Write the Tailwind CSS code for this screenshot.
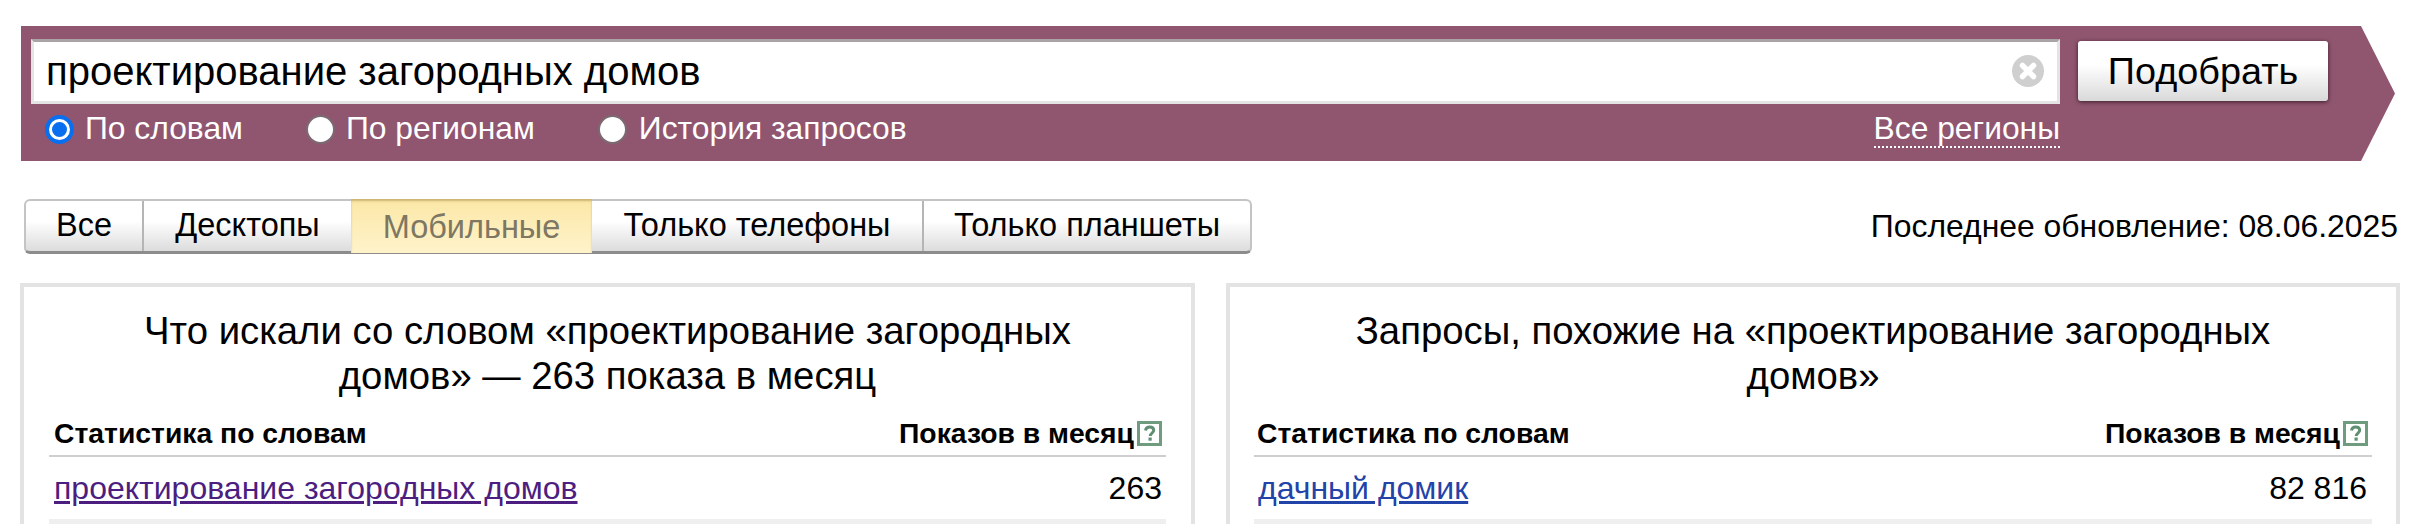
<!DOCTYPE html>
<html lang="ru" class="h-[524px] overflow-hidden">
<head>
	<meta charset="UTF-8">
	<title>Подбор слов</title>
	<script src="https://cdn.jsdelivr.net/npm/@tailwindcss/browser@4"></script>
</head>
<body class="bg-white h-[524px] overflow-hidden pt-[26px] pl-[21px] pr-[14px] font-['Liberation_Sans',Arial,sans-serif] text-black">

	<!-- search band -->
	<div class="w-[2374px] h-[135px] pt-[13px] pl-[10px] bg-[#90566f] [clip-path:polygon(0_0,2340px_0,100%_50%,2340px_100%,0_100%)]">
		<div class="flex items-start">
			<div class="w-[2029px] h-[65px] flex items-center justify-between pl-[12px] pr-[13px] pb-[2px] bg-white border-[3px] border-[#e4e4e4] border-t-[#a9a3a6]">
				<span class="text-[40px]">проектирование загородных домов</span>
				<svg width="32" height="32" viewBox="0 0 32 32"><circle cx="16" cy="16" r="16" fill="#cfcfcf"/><path d="M10.500 10.500l11 11M21.500 10.500l-11 11" stroke="#fff" stroke-width="5.500" stroke-linecap="round"/></svg>
			</div>
			<button class="w-[250px] h-[60px] ml-[18px] mt-[2px] rounded-[3px] text-[37.800px] bg-gradient-to-b from-white from-40% to-[#d9d9d9] shadow-[0_1px_4px_rgba(30,10,20,0.75)]">Подобрать</button>
		</div>
		<div class="flex items-center h-[50px] pl-[14px] pr-[335px] text-[31.800px] text-white">
			<label class="flex items-center gap-[11px]">
				<span class="w-[29px] h-[29px] rounded-full bg-[#0a6fef] border-[4px] border-[#0a6fef] flex items-center justify-center"><span class="w-full h-full rounded-full bg-[#0a6fef] border-[3px] border-white"></span></span>
				По словам
			</label>
			<label class="flex items-center gap-[11px] ml-[63px]">
				<span class="w-[29px] h-[29px] rounded-full bg-white border-2 border-[#7b6a72]"></span>
				По регионам
			</label>
			<label class="flex items-center gap-[12px] ml-[63px]">
				<span class="w-[29px] h-[29px] rounded-full bg-white border-2 border-[#7b6a72]"></span>
				История запросов
			</label>
			<a class="ml-auto border-b-2 border-dotted border-white leading-[36px]">Все регионы</a>
		</div>
	</div>

	<!-- device tabs -->
	<div class="flex items-center justify-between mt-[38px] ml-[3px] pr-[2px]">
		<div class="flex h-[55px] text-[32.500px] rounded-[6px] border-t-2 border-x-2 border-b-[3px] border-[#c4c4c4] border-b-[#8c8c8c] bg-gradient-to-b from-white from-40% to-[#dcdcdc] leading-[48px]">
			<div class="w-[118px] text-center border-r-2 border-[#b5b5b5]">Все</div>
			<div class="w-[207px] text-center">Десктопы</div>
			<div class="w-[241px] text-center text-[#7d7763] -my-[2px] leading-[56px] bg-gradient-to-b from-[#fbe7a6] to-[#fff3cb] shadow-[inset_0_2px_2px_rgba(160,130,60,0.5)]">Мобильные</div>
			<div class="w-[332px] text-center border-r-2 border-[#b5b5b5]">Только телефоны</div>
			<div class="w-[326px] text-center">Только планшеты</div>
		</div>
		<div class="text-[31.900px]">Последнее обновление: 08.06.2025</div>
	</div>

	<!-- result panels -->
	<div class="grid grid-cols-[1175px_1174px] gap-[31px] mt-[29px] -ml-[1px]">
		<div class="h-[241px] overflow-hidden border-4 border-b-0 border-[#e3e3e3] px-[25px] pt-[21px]">
			<h2 class="text-[38.300px] leading-[45px] text-center h-[92px]">Что искали со словом «проектирование загородных<br>домов» — 263 показа в месяц</h2>
			<div class="flex items-center justify-between h-[57px] pt-[11px] pl-[5px] pr-[4px] border-b-2 border-[#cfcfcf] text-[28.300px] font-bold">
				<span>Статистика по словам</span>
				<span class="flex items-center gap-[3px]">Показов в месяц
					<svg width="25" height="25" viewBox="0 0 25 25"><rect x="1.500" y="1.500" width="22" height="22" fill="#fff" stroke="#6f9c7f" stroke-width="3"/><path d="M8.500 9.500c.3-2.200 2-3.500 4.200-3.500 2.300 0 4 1.300 4 3.300 0 2.900-3.500 2.700-3.500 5.700" fill="none" stroke="#5f8f70" stroke-width="3"/><rect x="11.500" y="16.500" width="3.200" height="3.200" fill="#5f8f70"/></svg>
				</span>
			</div>
			<div class="flex items-center justify-between h-[62px] pl-[5px] pr-[4px] text-[32px]">
				<a class="text-[#4b1e7f] underline">проектирование загородных домов</a>
				<span>263</span>
			</div>
			<div class="h-[20px] bg-[#efefef]"></div>
		</div>
		<div class="h-[241px] overflow-hidden border-4 border-b-0 border-[#e3e3e3] px-[24px] pt-[21px]">
			<h2 class="text-[38.300px] leading-[45px] text-center h-[92px]">Запросы, похожие на «проектирование загородных<br>домов»</h2>
			<div class="flex items-center justify-between h-[57px] pt-[11px] pl-[3px] pr-[4px] border-b-2 border-[#cfcfcf] text-[28.300px] font-bold">
				<span>Статистика по словам</span>
				<span class="flex items-center gap-[3px]">Показов в месяц
					<svg width="25" height="25" viewBox="0 0 25 25"><rect x="1.500" y="1.500" width="22" height="22" fill="#fff" stroke="#6f9c7f" stroke-width="3"/><path d="M8.500 9.500c.3-2.200 2-3.500 4.200-3.500 2.300 0 4 1.300 4 3.300 0 2.900-3.500 2.700-3.500 5.700" fill="none" stroke="#5f8f70" stroke-width="3"/><rect x="11.500" y="16.500" width="3.200" height="3.200" fill="#5f8f70"/></svg>
				</span>
			</div>
			<div class="flex items-center justify-between h-[62px] pl-[4px] pr-[5px] text-[32px]">
				<a class="text-[#2243a8] underline">дачный домик</a>
				<span>82 816</span>
			</div>
			<div class="h-[20px] bg-[#efefef]"></div>
		</div>
	</div>
</body>
</html>
